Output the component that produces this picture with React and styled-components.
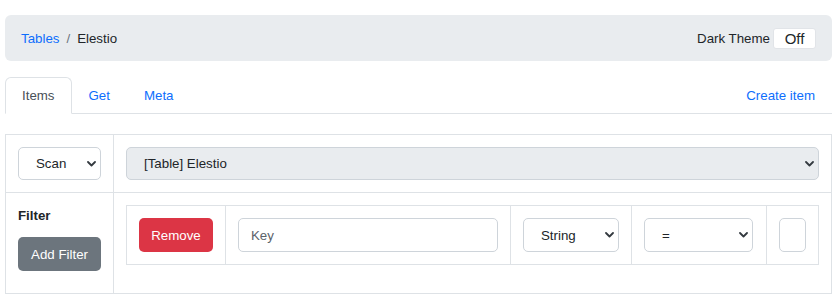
import styled, { createGlobalStyle } from "styled-components";

const GlobalStyle = createGlobalStyle`
  body {
    margin: 0;
    background: #fff;
    color: #212529;
    font-family: "Liberation Sans", Arial, sans-serif;
    font-size: 13.3px;
    line-height: 21px;
  }
  * { box-sizing: border-box; }
`;

const Page = styled.div`
  width: 832px;
  padding: 15px 0 0 5px;
`;

const Breadcrumb = styled.div`
  height: 46px;
  padding: 0 16px;
  background: #e9ecef;
  border-radius: 6px;
  display: flex;
  align-items: center;
  justify-content: space-between;
`;

const Crumbs = styled.div`
  display: flex;
  align-items: center;
  gap: 7px;
`;

const Link = styled.a`
  color: #0d6efd;
  text-decoration: none;
  cursor: pointer;
`;

const Divider = styled.span`
  color: #6c757d;
`;

const ThemeToggle = styled.div`
  display: flex;
  align-items: center;
  gap: 3px;
`;

const ToggleButton = styled.button`
  width: 43px;
  height: 21px;
  padding: 0;
  background: #fff;
  border: 1px solid #e1e4e8;
  border-radius: 3px;
  font-family: inherit;
  font-size: 15px;
  line-height: 19px;
  color: #212529;
`;

const Tabs = styled.div`
  margin-top: 16px;
  display: flex;
  align-items: flex-end;
  border-bottom: 1px solid #dee2e6;
`;

const Tab = styled.a`
  display: block;
  padding: 7px 16px;
  margin-bottom: -1px;
  border: 1px solid ${(p) => (p.$active ? "#dee2e6" : "transparent")};
  border-bottom-color: ${(p) => (p.$active ? "#fff" : "transparent")};
  border-radius: 6px 6px 0 0;
  background: ${(p) => (p.$active ? "#fff" : "transparent")};
  color: ${(p) => (p.$active ? "#495057" : "#0d6efd")};
  text-decoration: none;
  margin-left: ${(p) => (p.$push ? "auto" : "0")};
`;

const Grid = styled.div`
  margin-top: 20px;
  width: 827px;
  border: 1px solid #dee2e6;
  display: grid;
  grid-template-columns: 107px 1fr;
`;

const Cell = styled.div`
  padding: 12px;
  border-left: ${(p) => (p.$first ? "none" : "1px solid #dee2e6")};
  border-top: ${(p) => (p.$top ? "none" : "1px solid #dee2e6")};
`;

const FilterLabel = styled.div`
  font-weight: bold;
  margin-bottom: 11px;
`;

const Button = styled.button`
  height: ${(p) => p.$h || 34}px;
  padding: 0 12px;
  border: none;
  border-radius: 5px;
  background: ${(p) => p.$bg};
  color: #fff;
  font-family: inherit;
  font-size: 13.3px;
  line-height: 21px;
`;

const SelectWrap = styled.div`
  position: relative;
  width: ${(p) => (p.$w ? `${p.$w}px` : "100%")};
`;

const Select = styled.select`
  appearance: none;
  -webkit-appearance: none;
  width: 100%;
  height: ${(p) => p.$h || 34}px;
  padding: 0 20px 0 17px;
  border: 1px solid #ced4da;
  border-radius: 5px;
  background: ${(p) => (p.disabled ? "#e9ecef" : "#fff")};
  color: #212529;
  opacity: 1;
  font-family: inherit;
  font-size: 13.3px;
`;

const Chevron = styled.svg`
  position: absolute;
  right: 5px;
  top: 50%;
  margin-top: -3px;
  pointer-events: none;
`;

const Input = styled.input`
  width: ${(p) => (p.$w ? `${p.$w}px` : "100%")};
  height: 34px;
  padding: 0 12px;
  border: 1px solid #ced4da;
  border-radius: 5px;
  background: #fff;
  font-family: inherit;
  font-size: 13.3px;
  color: #212529;
  &::placeholder { color: #5c636a; }
`;

const FilterRow = styled.div`
  margin-bottom: 16px;
  border: 1px solid #dee2e6;
  display: grid;
  grid-template-columns: 98px 1fr 121px 135px 52px;
`;

const FilterCell = styled.div`
  padding: 12px;
  border-left: ${(p) => (p.$first ? "none" : "1px solid #dee2e6")};
`;

function Dropdown({ width, height, disabled, value, options }) {
  return (
    <SelectWrap $w={width}>
      <Select $h={height} disabled={disabled} defaultValue={value}>
        {options.map((o) => (
          <option key={o}>{o}</option>
        ))}
      </Select>
      <Chevron width="9" height="6" viewBox="0 0 9 6">
        <path d="M1 1l3.5 3.5L8 1" fill="none" stroke="#343a40" strokeWidth="1.8" strokeLinecap="round" strokeLinejoin="round" />
      </Chevron>
    </SelectWrap>
  );
}

export default function App() {
  return (
    <Page>
      <GlobalStyle />
      <Breadcrumb>
        <Crumbs>
          <Link>Tables</Link>
          <Divider>/</Divider>
          <span>Elestio</span>
        </Crumbs>
        <ThemeToggle>
          <span>Dark Theme</span>
          <ToggleButton>Off</ToggleButton>
        </ThemeToggle>
      </Breadcrumb>

      <Tabs>
        <Tab $active>Items</Tab>
        <Tab>Get</Tab>
        <Tab>Meta</Tab>
        <Tab $push>Create item</Tab>
      </Tabs>

      <Grid>
        <Cell $first $top>
          <Dropdown width={83} height={33} value="Scan" options={["Scan", "Query"]} />
        </Cell>
        <Cell $top>
          <Dropdown height={33} disabled value="[Table] Elestio" options={["[Table] Elestio"]} />
        </Cell>
        <Cell $first>
          <FilterLabel>Filter</FilterLabel>
          <Button $bg="#6c757d" style={{ width: 83 }}>Add Filter</Button>
        </Cell>
        <Cell>
          <FilterRow>
            <FilterCell $first>
              <Button $bg="#dc3545" style={{ width: 74 }}>Remove</Button>
            </FilterCell>
            <FilterCell>
              <Input placeholder="Key" />
            </FilterCell>
            <FilterCell>
              <Dropdown width={96} value="String" options={["String", "Number", "Boolean"]} />
            </FilterCell>
            <FilterCell>
              <Dropdown width={109} value="=" options={["=", "!=", "<", ">"]} />
            </FilterCell>
            <FilterCell>
              <Input $w={27} />
            </FilterCell>
          </FilterRow>
        </Cell>
      </Grid>
    </Page>
  );
}
